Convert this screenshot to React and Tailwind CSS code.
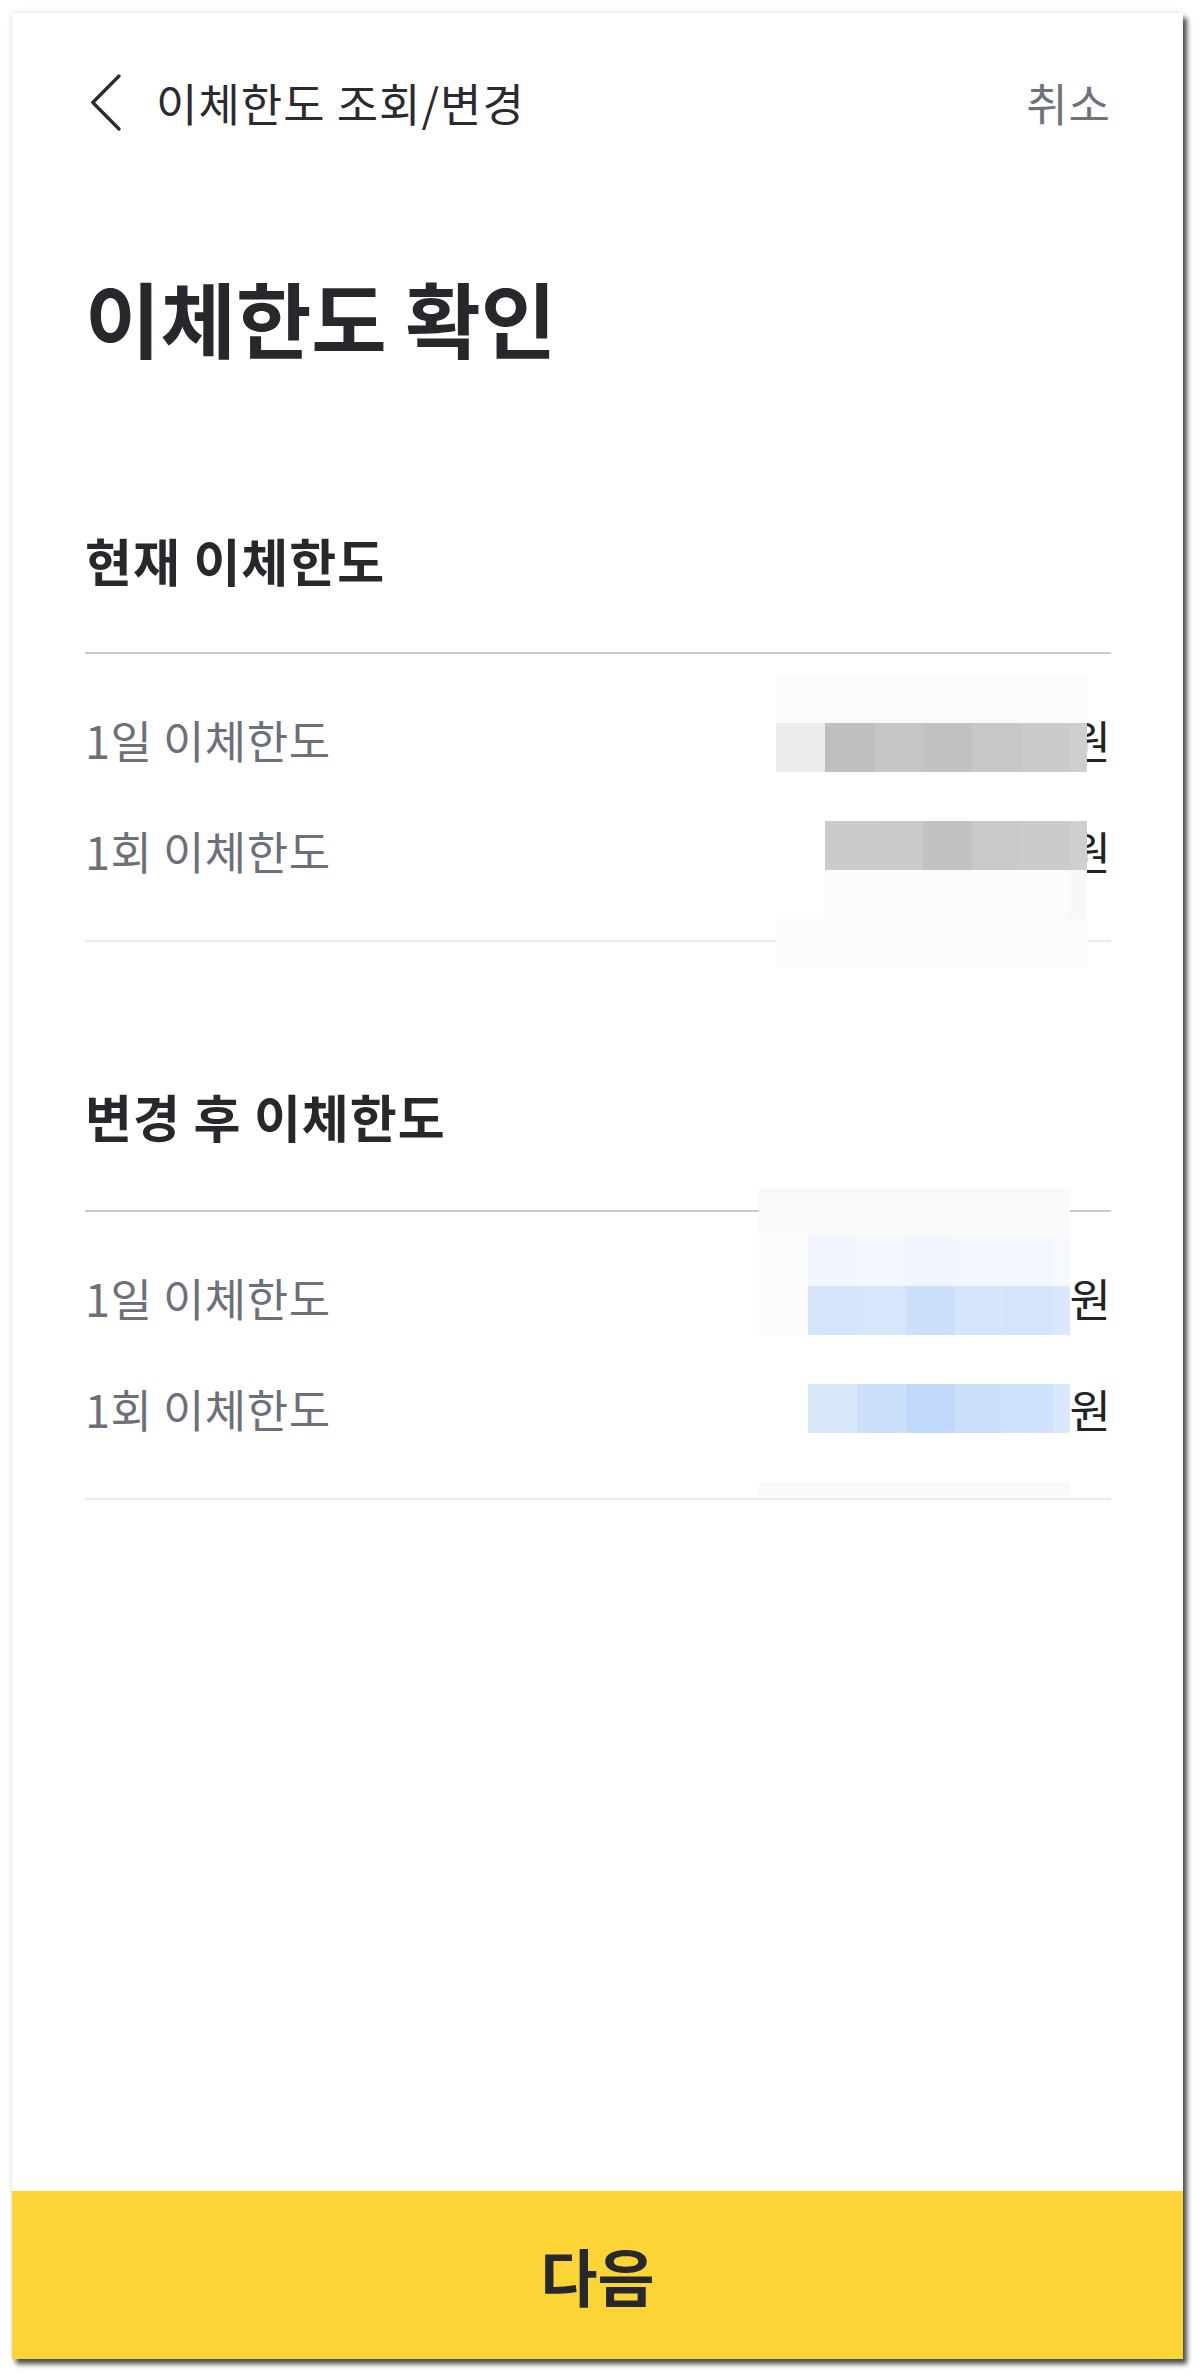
import React from 'react';

// redaction mosaic tiles, one array per tile row (7 columns: six 49px + one 17px)
const currentTiles = [
  ['bg-[#fbfbfb]', 'bg-[#fbfbfb]', 'bg-[#fbfbfb]', 'bg-[#fbfbfb]', 'bg-[#fbfbfb]', 'bg-[#fbfbfb]', 'bg-[#fbfbfb]'],
  ['bg-[#ececec]', 'bg-[#bfbfc0]', 'bg-[#c6c6c7]', 'bg-[#c2c2c2]', 'bg-[#c6c7c8]', 'bg-[#cacbcc]', 'bg-[#cfcfd0]'],
  ['', '', '', '', '', '', ''],
  ['', 'bg-[#cbcbcb]', 'bg-[#c9cacb]', 'bg-[#c2c2c2]', 'bg-[#c8c9ca]', 'bg-[#cacbcc]', 'bg-[#cfcfd0]'],
  ['', 'bg-[#fbfbfb]', 'bg-[#fcfcfc]', 'bg-[#fbfbfb]', 'bg-[#fcfcfc]', 'bg-[#fbfbfb]', 'bg-[#f8f8f8]'],
  ['bg-[#fcfcfc]', 'bg-[#fcfcfc]', 'bg-[#fcfcfc]', 'bg-[#fcfcfc]', 'bg-[#fcfcfc]', 'bg-[#fcfcfc]', 'bg-[#fcfcfc]'],
];

const changedTiles = [
  ['bg-[#fafafa]', 'bg-[#fafafa]', 'bg-[#fafafa]', 'bg-[#fafafa]', 'bg-[#fafafa]', 'bg-[#fafafa]', 'bg-[#fafafa]'],
  ['bg-[#fcfcfc]', 'bg-[#f1f6fe]', 'bg-[#f2f6fe]', 'bg-[#f1f6fe]', 'bg-[#f2f6fe]', 'bg-[#f2f6fe]', 'bg-[#f6f9fe]'],
  ['bg-[#fcfcfc]', 'bg-[#d4e4fb]', 'bg-[#d6e6fc]', 'bg-[#cce0fc]', 'bg-[#d6e5fc]', 'bg-[#d4e4fb]', 'bg-[#d9e8fd]'],
  ['', '', '', '', '', '', ''],
  ['', 'bg-[#d9e8fd]', 'bg-[#cde0fb]', 'bg-[#c0d9fb]', 'bg-[#cde0fa]', 'bg-[#cfe2fb]', 'bg-[#d9e8fd]'],
  ['', '', '', '', '', '', ''],
  ['bg-[#fafafa]', 'bg-[#fafafa]', 'bg-[#fafafa]', 'bg-[#fafafa]', 'bg-[#fafafa]', 'bg-[#fafafa]', 'bg-[#fafafa]'],
];

const Mosaic = ({ tiles, className }) => (
  <div className={`absolute grid grid-cols-[repeat(6,49px)_17px] ${className}`}>
    {tiles.flat().map((c, i) => (
      <div key={i} className={c} />
    ))}
  </div>
);

const LimitSection = ({ title, tiles, mosaicClass, className, dividerGap }) => (
  <section className={className}>
    <h2 className="text-[51px] font-bold leading-none tracking-[1px] text-[#26282c]">{title}</h2>
    <div className={`h-[2px] bg-[#c8ccd1] ${dividerGap}`} />
    <div className="relative pt-[30px] pb-[34px]">
      <div className="flex h-[111px] items-center justify-between text-[45px] leading-none">
        <span className="tracking-[0.5px] text-[#6c7079]">1일 이체한도</span>
        <span className="text-[#222326]">원</span>
      </div>
      <div className="flex h-[111px] items-center justify-between text-[45px] leading-none">
        <span className="tracking-[0.5px] text-[#6c7079]">1회 이체한도</span>
        <span className="text-[#222326]">원</span>
      </div>
      <Mosaic tiles={tiles} className={mosaicClass} />
    </div>
    <div className="h-[2px] bg-[#e9ebee]" />
  </section>
);

export default function App() {
  return (
    <div className="w-[1204px] h-[2380px] bg-white pt-[13px] pl-[12px] font-['Noto_Sans_CJK_KR','Noto_Sans',sans-serif]">
      <div className="flex w-[1171px] h-[2346px] flex-col bg-white shadow-[4px_5px_5px_rgba(0,0,0,0.7),0_-1px_6px_rgba(0,0,0,0.1)]">
        {/* header */}
        <header className="flex h-[178px] items-center pl-[79px] pr-[72px]">
          <svg width="30" height="57" viewBox="0 0 30 57" fill="none" stroke="#2a2b2e" strokeWidth="3.3" strokeLinecap="round" strokeLinejoin="round">
            <path d="M28 2 L1.8 28.5 L28 55" />
          </svg>
          <span className="ml-[35px] text-[45px] leading-none tracking-[1px] text-[#2a2b2e]">이체한도 조회/변경</span>
          <span className="ml-auto text-[45px] leading-none tracking-[1px] text-[#6e737b]">취소</span>
        </header>

        <main className="pl-[73px] pr-[72px]">
          <h1 className="mt-[85px] text-[82px] font-bold leading-none text-[#26282c]">이체한도 확인</h1>

          <LimitSection
            title="현재 이체한도"
            tiles={currentTiles}
            className="mt-[177px]"
            dividerGap="mt-[66px]"
            mosaicClass="top-[20px] right-[24px] grid-rows-[repeat(6,49px)]"
          />

          <LimitSection
            title="변경 후 이체한도"
            tiles={changedTiles}
            className="mt-[149px]"
            dividerGap="mt-[68px]"
            mosaicClass="top-[-24px] right-[41px] grid-rows-[repeat(6,49px)_16px]"
          />
        </main>

        <div className="flex-1" />

        <button className="flex h-[168px] w-full items-center justify-center bg-[#fdd436] text-[62px] font-bold leading-none text-[#26282c]">
          다음
        </button>
      </div>
    </div>
  );
}
